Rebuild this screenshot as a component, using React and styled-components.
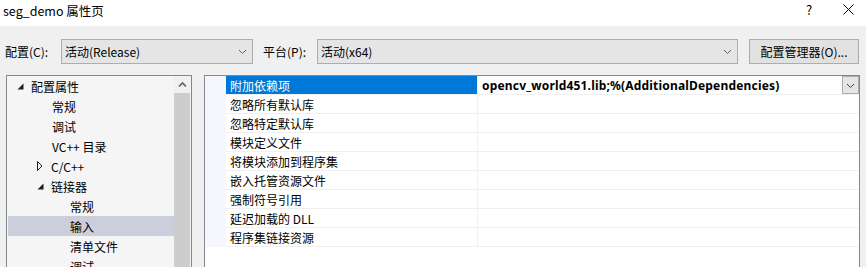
import React from 'react';
import styled, { createGlobalStyle } from 'styled-components';

const GlobalStyle = createGlobalStyle`
  html, body {
    margin: 0;
    padding: 0;
    background: #f0f0f0;
  }
  body {
    font-family: "Segoe UI", "Noto Sans", "Noto Sans CJK SC", sans-serif;
    font-size: 12px;
    color: #000;
  }
`;

const cjk = `"Noto Sans CJK SC", "Noto Sans", sans-serif`;

const Window = styled.div`
  width: 866px;
  height: 267px;
  overflow: hidden;
  background: #f0f0f0;
  font-family: ${cjk};
`;

const TitleBar = styled.div`
  height: 26px;
  background: #fff;
  display: flex;
  align-items: center;
  padding-left: 3px;
`;

const Title = styled.div`
  flex: 1;
  font-size: 12.5px;
  line-height: 16px;
  margin-top: -4px;
`;

const TitleButtons = styled.div`
  display: flex;
  gap: 9px;
  margin-right: 3px;
  margin-top: -8px;
`;

const TitleButton = styled.div`
  width: 30px;
  height: 26px;
  display: flex;
  align-items: center;
  justify-content: center;
  font-size: 13px;
`;

const ConfigRow = styled.div`
  display: flex;
  align-items: center;
  height: 25px;
  margin-top: 13px;
  padding-left: 5px;
`;

const Label = styled.span`
  width: ${(p) => p.$w}px;
  flex: none;
  white-space: nowrap;
`;

const Combo = styled.div`
  width: ${(p) => p.$w}px;
  height: 25px;
  box-sizing: border-box;
  border: 1px solid #adadad;
  background: #e5e5e5;
  display: flex;
  align-items: center;
  padding-left: 3px;
  margin-right: ${(p) => p.$mr}px;
`;

const ComboText = styled.span`
  flex: 1;
`;

const Chevron = ({ size = 9, color = '#606060', up }) => (
  <svg width={size} height={size} viewBox="0 0 9 9">
    <path
      d={up ? 'M1 6.5 L4.5 3 L8 6.5' : 'M1 3 L4.5 6.5 L8 3'}
      fill="none"
      stroke={color}
      strokeWidth={up ? 1.6 : 1}
    />
  </svg>
);

const ComboArrow = styled.span`
  width: 20px;
  display: flex;
  justify-content: center;
`;

const Button = styled.div`
  width: 110px;
  height: 25px;
  box-sizing: border-box;
  border: 1px solid #adadad;
  background: #e1e1e1;
  display: flex;
  align-items: center;
  justify-content: center;
`;

const Main = styled.div`
  display: flex;
  margin-top: 11px;
  padding-left: 6px;
`;

const TreePanel = styled.div`
  width: 186px;
  height: 200px;
  box-sizing: border-box;
  border: 1px solid #828790;
  border-bottom: none;
  background: #f5f5f5;
  display: flex;
  margin-right: 12px;
`;

const TreeList = styled.div`
  flex: 1;
  padding: 0 0 0 1px;
`;

const TreeRow = styled.div`
  height: 20px;
  display: flex;
  align-items: center;
  padding-left: ${(p) => p.$indent}px;
  background: ${(p) => (p.$selected ? '#cccedb' : 'transparent')};
  white-space: nowrap;
`;

const Expander = styled.span`
  width: 14px;
  flex: none;
  display: flex;
  align-items: center;
`;

const Scrollbar = styled.div`
  width: 17px;
  background: #f0f0f0;
  display: flex;
  flex-direction: column;
`;

const ScrollUp = styled.div`
  height: 17px;
  display: flex;
  align-items: center;
  justify-content: center;
`;

const ScrollThumb = styled.div`
  flex: 1;
  margin-right: 1px;
  background: #cdcdcd;
`;

const GridPanel = styled.div`
  width: 656px;
  height: 200px;
  box-sizing: border-box;
  border: 1px solid #828790;
  border-bottom: none;
  background: #fff;
`;

const PropGrid = styled.div`
  display: grid;
  grid-template-columns: 21px 252px 1fr;
`;

const Gutter = styled.div`
  background: #f5f7fc;
`;

const Cell = styled.div`
  height: 18px;
  border-bottom: 1px solid #f0f0f0;
  display: flex;
  align-items: center;
  padding-left: 4px;
  white-space: nowrap;
  background: ${(p) => (p.$selected ? '#0078d7' : '#fff')};
  color: ${(p) => (p.$selected ? '#fff' : '#000')};
  border-right: ${(p) => (p.$name ? '1px solid #f0f0f0' : 'none')};
`;

const Value = styled.span`
  flex: 1;
  font-family: "Segoe UI", "Noto Sans", sans-serif;
  font-weight: bold;
  letter-spacing: 0.18px;
`;

const DropButton = styled.div`
  width: 17px;
  height: 18px;
  box-sizing: border-box;
  border: 1px solid #adadad;
  background: #e5e5e5;
  display: flex;
  align-items: center;
  justify-content: center;
`;

const tree = [
  { label: '配置属性', indent: 9, exp: 'open' },
  { label: '常规', indent: 44 },
  { label: '调试', indent: 44 },
  { label: 'VC++ 目录', indent: 44 },
  { label: 'C/C++', indent: 29, exp: 'closed' },
  { label: '链接器', indent: 29, exp: 'open' },
  { label: '常规', indent: 62 },
  { label: '输入', indent: 62, selected: true },
  { label: '清单文件', indent: 62 },
  { label: '调试', indent: 62 },
];

const props = [
  '附加依赖项',
  '忽略所有默认库',
  '忽略特定默认库',
  '模块定义文件',
  '将模块添加到程序集',
  '嵌入托管资源文件',
  '强制符号引用',
  '延迟加载的 DLL',
  '程序集链接资源',
];

const ExpandIcon = ({ kind }) =>
  kind === 'open' ? (
    <svg width="7" height="7" viewBox="0 0 7 7">
      <path d="M6.5 0.5 L6.5 6.5 L0.5 6.5 Z" fill="#1e1e1e" />
    </svg>
  ) : (
    <svg width="6" height="10" viewBox="0 0 6 10">
      <path d="M0.5 0.5 L5 5 L0.5 9.5 Z" fill="none" stroke="#1e1e1e" />
    </svg>
  );

export default function App() {
  return (
    <Window>
      <GlobalStyle />
      <TitleBar>
        <Title>seg_demo 属性页</Title>
        <TitleButtons>
          <TitleButton>?</TitleButton>
          <TitleButton>
            <svg width="11" height="11" viewBox="0 0 11 11">
              <path d="M0.5 0.5 L10.5 10.5 M10.5 0.5 L0.5 10.5" stroke="#000" strokeWidth="1" />
            </svg>
          </TitleButton>
        </TitleButtons>
      </TitleBar>

      <ConfigRow>
        <Label $w={56}>配置(C):</Label>
        <Combo $w={192} $mr={10}>
          <ComboText>活动(Release)</ComboText>
          <ComboArrow><Chevron /></ComboArrow>
        </Combo>
        <Label $w={54}>平台(P):</Label>
        <Combo $w={421} $mr={11}>
          <ComboText>活动(x64)</ComboText>
          <ComboArrow><Chevron /></ComboArrow>
        </Combo>
        <Button>配置管理器(O)...</Button>
      </ConfigRow>

      <Main>
        <TreePanel>
          <TreeList>
            {tree.map((t, i) => (
              <TreeRow key={i} $indent={t.indent} $selected={t.selected}>
                {t.exp && (
                  <Expander>
                    <ExpandIcon kind={t.exp} />
                  </Expander>
                )}
                {t.label}
              </TreeRow>
            ))}
          </TreeList>
          <Scrollbar>
            <ScrollUp>
              <Chevron up color="#606060" />
            </ScrollUp>
            <ScrollThumb />
          </Scrollbar>
        </TreePanel>

        <GridPanel>
          <PropGrid>
            {props.map((name, i) => (
              <React.Fragment key={i}>
                <Gutter />
                <Cell $name $selected={i === 0}>{name}</Cell>
                <Cell>
                  {i === 0 && (
                    <>
                      <Value>opencv_world451.lib;%(AdditionalDependencies)</Value>
                      <DropButton><Chevron color="#404040" /></DropButton>
                    </>
                  )}
                </Cell>
              </React.Fragment>
            ))}
          </PropGrid>
        </GridPanel>
      </Main>
    </Window>
  );
}
